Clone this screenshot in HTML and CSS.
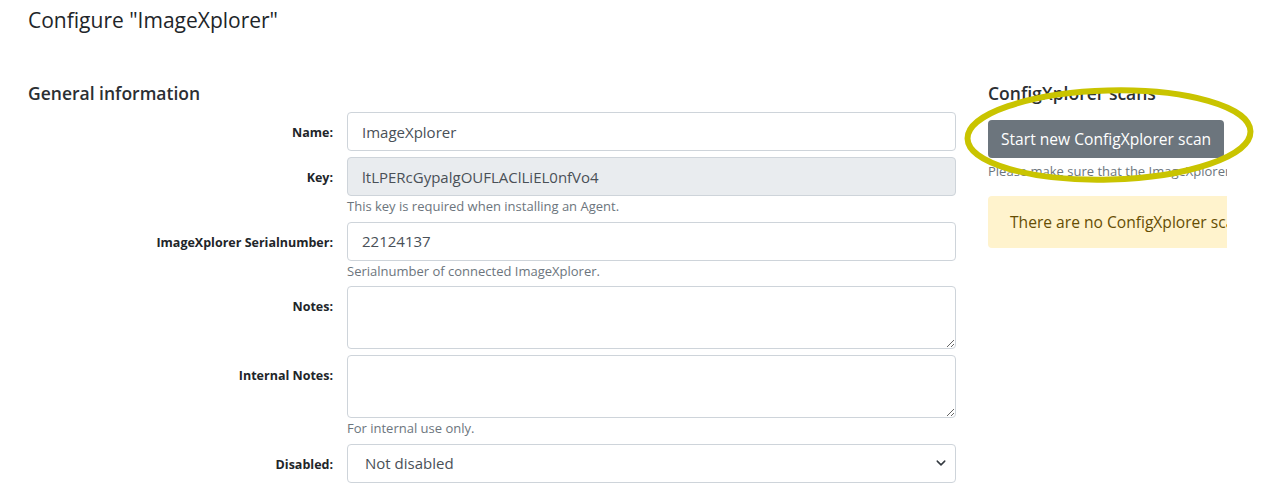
FILE: index.html
```html
<!DOCTYPE html>
<html lang="en">
<head>
    <meta charset="UTF-8">
    <meta name="viewport" content="width=device-width, initial-scale=1.0">
    <title>Configure ImageXplorer</title>
    <link rel="stylesheet" href="styles.css">
</head>
<body>
    <div class="page">
        <h1>Configure "ImageXplorer"</h1>

        <div class="layout">
            <div class="general">
                <h2>General information</h2>

                <div class="form-row">
                    <label class="form-label" for="name">Name:</label>
                    <div class="form-field">
                        <input type="text" id="name" class="form-control" value="ImageXplorer">
                    </div>
                </div>

                <div class="form-row">
                    <label class="form-label" for="key">Key:</label>
                    <div class="form-field">
                        <input type="text" id="key" class="form-control" value="ltLPERcGypalgOUFLAClLiEL0nfVo4" readonly>
                        <div class="form-help">This key is required when installing an Agent.</div>
                    </div>
                </div>

                <div class="form-row">
                    <label class="form-label" for="serial">ImageXplorer Serialnumber:</label>
                    <div class="form-field">
                        <input type="text" id="serial" class="form-control" value="22124137">
                        <div class="form-help">Serialnumber of connected ImageXplorer.</div>
                    </div>
                </div>

                <div class="form-row">
                    <label class="form-label" for="notes">Notes:</label>
                    <div class="form-field">
                        <textarea id="notes" class="form-control notes"></textarea>
                    </div>
                </div>

                <div class="form-row">
                    <label class="form-label" for="internalNotes">Internal Notes:</label>
                    <div class="form-field">
                        <textarea id="internalNotes" class="form-control notes"></textarea>
                        <div class="form-help">For internal use only.</div>
                    </div>
                </div>

                <div class="form-row">
                    <label class="form-label" for="disabled">Disabled:</label>
                    <div class="form-field">
                        <select id="disabled" class="form-control form-select">
                            <option>Not disabled</option>
                            <option>Disabled</option>
                        </select>
                    </div>
                </div>
            </div>

            <div class="scans">
                <div class="scans-inner">
                    <h2>ConfigXplorer scans</h2>
                    <button class="btn-scan">Start new ConfigXplorer scan</button>
                    <div class="form-help">Please make sure that the ImageXplorer is connected.</div>
                    <div class="alert">There are no ConfigXplorer scans yet.</div>
                </div>
                <!-- highlight around the scan button -->
                <svg class="highlight" width="300" height="110" viewBox="0 0 300 110">
                    <ellipse cx="150" cy="55" rx="141.5" ry="44.5" transform="rotate(-1.5 150 55)"
                             fill="none" stroke="#c9c400" stroke-width="6"/>
                </svg>
            </div>
        </div>
    </div>
</body>
</html>
```

FILE: styles.css
```css
body {
    margin: 0;
    font-family: "Open Sans", "Noto Sans", sans-serif;
    color: #212529;
    background-color: #fff;
}

.page {
    padding: 4px 0 0 28px;
}

h1 {
    font-size: 21px;
    font-weight: 400;
    margin: 0;
    line-height: 32px;
}

h2 {
    font-size: 17.5px;
    font-weight: 600;
    margin: 0 0 7px;
    line-height: 24px;
    color: #2b2f33;
}

.layout {
    display: grid;
    grid-template-columns: 928px 239px;
    column-gap: 32px;
    margin-top: 45px;
}

.form-row {
    display: grid;
    grid-template-columns: 305px 609px;
    column-gap: 14px;
    margin-bottom: 6px;
}

.form-label {
    text-align: right;
    font-size: 12.5px;
    font-weight: 700;
    line-height: 18px;
    padding-top: 12px;
}

.form-control {
    display: block;
    width: 100%;
    box-sizing: border-box;
    height: 39px;
    padding: 6px 14px;
    font-family: inherit;
    font-size: 15px;
    color: #495057;
    background-color: #fff;
    border: 1px solid #ced4da;
    border-radius: 4px;
}

.form-control[readonly] {
    background-color: #e9ecef;
}

.notes {
    height: 63px;
}

.form-select {
    appearance: none;
    padding-left: 17px;
    background-image: url("data:image/svg+xml,%3csvg xmlns='http://www.w3.org/2000/svg' viewBox='0 0 16 16'%3e%3cpath fill='none' stroke='%23343a40' stroke-linecap='round' stroke-linejoin='round' stroke-width='2.4' d='M2 5l6 6 6-6'/%3e%3c/svg%3e");
    background-repeat: no-repeat;
    background-position: right 8px center;
    background-size: 12px 10px;
}

.form-help {
    font-size: 13px;
    color: #6c757d;
    line-height: 18.5px;
    margin-top: 1px;
}

.scans {
    position: relative;
}

/* the column is cut at the right edge, like the reference capture */
.scans-inner {
    width: 239px;
    overflow: hidden;
}

.scans-inner > * {
    width: 360px;
    white-space: nowrap;
}

.scans-inner h2 {
    margin-bottom: 15px;
}

.btn-scan {
    display: block;
    width: auto;
    height: 38px;
    padding: 0 13px;
    font-family: inherit;
    font-size: 15.6px;
    color: #fff;
    background-color: #6c757d;
    border: none;
    border-radius: 4px;
}

.scans-inner .form-help {
    margin-top: 4px;
    line-height: 18px;
}

.alert {
    box-sizing: border-box;
    height: 52px;
    margin-top: 16px;
    padding: 0 22px;
    line-height: 52px;
    font-size: 15.6px;
    color: #664d03;
    background-color: #fff3cd;
    border-radius: 4px;
}

.highlight {
    position: absolute;
    left: -29px;
    top: -1px;
    pointer-events: none;
}
```
